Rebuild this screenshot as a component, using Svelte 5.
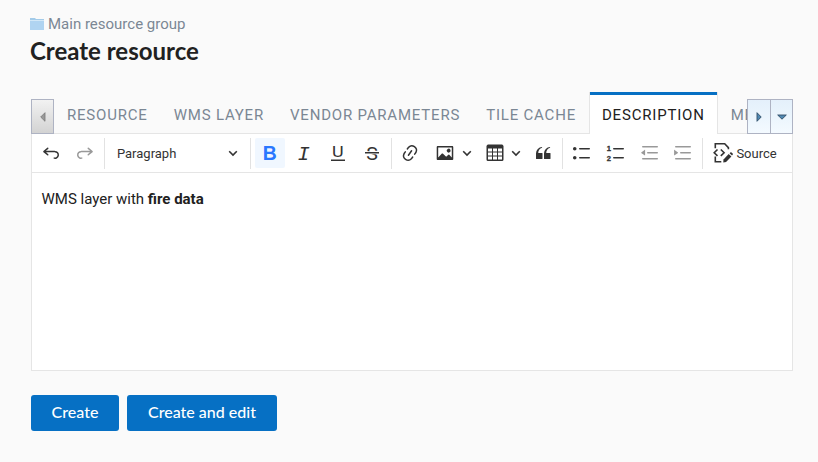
<script>
  const tabs = ['RESOURCE', 'WMS LAYER', 'VENDOR PARAMETERS', 'TILE CACHE', 'DESCRIPTION', 'METADATA'];
  let active = $state('DESCRIPTION');
</script>

{#snippet chevron()}
  <svg class="chev" width="10" height="10" viewBox="0 0 10 10"><path d="M1.2 3.2 5 7l3.8-3.8" /></svg>
{/snippet}

{#snippet undoArrow()}
  <path d="m5.042 9.367 2.189 1.837a.75.75 0 0 1-.965 1.149l-3.788-3.18a.747.747 0 0 1-.21-.284.75.75 0 0 1 .17-.945L6.23 4.762a.75.75 0 1 1 .964 1.15L4.863 7.866h8.917A.75.75 0 0 1 14 7.9a4 4 0 1 1-1.477 7.718l.344-1.489a2.5 2.5 0 1 0 1.094-4.73l.008-.032H5.042z" />
{/snippet}

<main>
  <div class="crumb">
    <svg width="14" height="12" viewBox="0 0 14 12"><path fill="#a3cbe9" d="M0 0h5l1 1h8v11H0z" /><path fill="#d3e8f7" d="M0 2h14v1H0z" /><path fill="#b0d4f1" d="M0 3h14v9H0z" /></svg>
    <span>Main resource group</span>
  </div>
  <h1>Create resource</h1>

  <section class="panel">
    <div class="tabbar">
      <button class="scroll prev" aria-label="Previous"><svg width="6" height="10" viewBox="0 0 6 10"><path d="M5 .7v8.6L.7 5z" fill="#999" stroke="#777" stroke-width=".8" /></svg></button>
      <div class="tabs">
        {#each tabs as tab}
          <button class="tab" class:active={tab === active} onclick={() => (active = tab)}>{tab}</button>
        {/each}
      </div>
      <button class="scroll next" aria-label="Next"><svg width="6" height="10" viewBox="0 0 6 10"><path d="M1 .7v8.6L5.2 5z" fill="#5089b3" stroke="#304d66" stroke-width=".9" /></svg></button>
      <button class="scroll more" aria-label="All tabs"><svg width="10" height="6" viewBox="0 0 10 6"><path d="M.7 1h8.6L5 5.2z" fill="#5089b3" stroke="#304d66" stroke-width=".9" /></svg></button>
    </div>

    <div class="toolbar">
      <button class="tool"><svg viewBox="0 0 20 20">{@render undoArrow()}</svg></button>
      <button class="tool dim"><svg viewBox="0 0 20 20"><g transform="matrix(-1 0 0 1 20 0)">{@render undoArrow()}</g></svg></button>
      <i class="sep"></i>
      <button class="heading"><span>Paragraph</span>{@render chevron()}</button>
      <i class="sep"></i>
      <button class="tool on"><svg viewBox="0 0 20 20"><text class="arial" x="2.7" y="17" font-size="19.5" font-weight="700" textLength="14" lengthAdjust="spacingAndGlyphs">B</text></svg></button>
      <button class="tool"><svg viewBox="0 0 20 20"><text class="mono" x="3.6" y="17" font-size="20.5">I</text></svg></button>
      <button class="tool"><svg viewBox="0 0 20 20"><text x="4.1" y="13.8" font-size="15.2" textLength="11.6" lengthAdjust="spacingAndGlyphs">U</text><path d="M3 18v-1.5h14V18z" /></svg></button>
      <button class="tool"><svg viewBox="0 0 20 20"><text x="4.3" y="16.8" font-size="19" textLength="11.6" lengthAdjust="spacingAndGlyphs">S</text><path fill="#fff" d="M3 8.2h14v3.1H3z" /><path d="M3 10.5V9h14v1.5z" /></svg></button>
      <i class="sep"></i>
      <button class="tool link"><svg viewBox="0 0 20 20"><path d="m11.077 15 .991-1.416a.75.75 0 1 1 1.229.86l-1.148 1.64a.748.748 0 0 1-.217.206 5.251 5.251 0 0 1-8.503-5.955.741.741 0 0 1 .12-.274l1.147-1.639a.75.75 0 1 1 1.228.86L4.933 10.7l.006.003a3.75 3.75 0 0 0 6.132 4.294l.006.004zm5.494-5.335a.748.748 0 0 1-.12.274l-1.147 1.639a.75.75 0 1 1-1.228-.86l.86-1.23a3.75 3.75 0 0 0-6.144-4.301l-.86 1.229a.75.75 0 0 1-1.229-.86l1.148-1.64a.748.748 0 0 1 .217-.206 5.251 5.251 0 0 1 8.503 5.955zm-4.563-2.532a.75.75 0 0 1 .184 1.045l-3.155 4.505a.75.75 0 1 1-1.229-.86l3.155-4.506a.75.75 0 0 1 1.045-.184z" /></svg></button>
      <button class="tool split"><svg viewBox="0 0 20 20"><path d="M6.91 10.54c.26-.23.64-.21.88.03l3.36 3.14 2.23-2.06a.64.64 0 0 1 .87 0l2.52 2.97V4.5H3.2v10.12l3.71-4.08zm10.27-7.51c.6 0 1.09.47 1.09 1.05v11.84c0 .59-.49 1.06-1.09 1.06H2.79c-.6 0-1.09-.47-1.09-1.06V4.08c0-.58.49-1.05 1.1-1.05h14.38zm-5.22 5.56a1.96 1.96 0 1 1 3.4-1.96 1.96 1.96 0 0 1-3.4 1.96z" /></svg>{@render chevron()}</button>
      <button class="tool split table"><svg viewBox="0 0 20 20"><path d="M3 5.5v3h4v-3H3zm0 4v3h4v-3H3zm0 4v3h4v-3H3zm5 3h4v-3H8v3zm5 0h4v-3h-4v3zm4-4v-3h-4v3h4zm0-4v-3h-4v3h4zm1.5 8A1.5 1.5 0 0 1 17 18H3a1.5 1.5 0 0 1-1.5-1.5V3c.222-.863 1.068-1.5 2-1.5h13c.932 0 1.778.637 2 1.5v13.5zM12 12.5v-3H8v3h4zm0-4v-3H8v3h4z" /></svg>{@render chevron()}</button>
      <button class="tool"><svg viewBox="0 0 20 20"><path d="M3 10.423a6.5 6.5 0 0 1 6.056-6.408l.038.67C6.448 5.423 5.354 7.663 5.22 10H9c.552 0 .5.432.5.986v4.511c0 .554-.448.503-1 .503h-5c-.552 0-.5-.449-.5-1.003v-4.574zm8 0a6.5 6.5 0 0 1 6.056-6.408l.038.67c-2.646.739-3.74 2.979-3.873 5.315H17c.552 0 .5.432.5.986v4.511c0 .554-.448.503-1 .503h-5c-.552 0-.5-.449-.5-1.003v-4.574z" /></svg></button>
      <i class="sep"></i>
      <button class="tool"><svg viewBox="0 0 20 20"><path d="M7 5.75c0 .414.336.75.75.75h9.5a.75.75 0 1 0 0-1.5h-9.5a.75.75 0 0 0-.75.75zm-6 0C1 4.784 1.777 4 2.75 4c.966 0 1.75.777 1.75 1.75 0 .966-.777 1.75-1.75 1.75C1.784 7.5 1 6.723 1 5.75zm6 9c0 .414.336.75.75.75h9.5a.75.75 0 1 0 0-1.5h-9.5a.75.75 0 0 0-.75.75zm-6 0c0-.966.777-1.75 1.75-1.75.966 0 1.75.777 1.75 1.75 0 .966-.777 1.75-1.75 1.75-.966 0-1.75-.777-1.75-1.75z" /></svg></button>
      <button class="tool"><svg viewBox="0 0 20 20"><path d="M7 5.75c0 .414.336.75.75.75h9.5a.75.75 0 1 0 0-1.5h-9.5a.75.75 0 0 0-.75.75zm0 9c0 .414.336.75.75.75h9.5a.75.75 0 1 0 0-1.5h-9.5a.75.75 0 0 0-.75.75z" /><text class="digit" x=".8" y="8">1</text><text class="digit" x=".8" y="17.8">2</text></svg></button>
      <button class="tool dim shift"><svg viewBox="0 0 20 20"><path d="M2 3.75c0 .414.336.75.75.75h14.5a.75.75 0 1 0 0-1.5H2.75a.75.75 0 0 0-.75.75zm5 6c0 .414.336.75.75.75h9.5a.75.75 0 1 0 0-1.5h-9.5a.75.75 0 0 0-.75.75zM2.75 16.5h14.5a.75.75 0 1 0 0-1.5H2.75a.75.75 0 1 0 0 1.5zM1.2 9.4 4.6 6.9c.3-.2.5-.1.5.2v5c0 .3-.2.4-.5.2L1.2 9.9z" /></svg></button>
      <button class="tool dim"><svg viewBox="0 0 20 20"><path d="M2 3.75c0 .414.336.75.75.75h14.5a.75.75 0 1 0 0-1.5H2.75a.75.75 0 0 0-.75.75zm5 6c0 .414.336.75.75.75h9.5a.75.75 0 1 0 0-1.5h-9.5a.75.75 0 0 0-.75.75zM2.75 16.5h14.5a.75.75 0 1 0 0-1.5H2.75a.75.75 0 1 0 0 1.5zM5 9.4 1.6 6.9c-.3-.2-.5-.1-.5.2v5c0 .3.2.4.5.2L5 9.9z" /></svg></button>
      <i class="sep"></i>
      <button class="tool source"><svg viewBox="0 0 20 20"><g fill="none" stroke="#333" stroke-width="1.6"><path d="M2.3 5.3V.8h9.4l3.7 3.8v1.7M2.3 13.5v5.2h6" /><path d="m4.5 6.5-3.3 3.2 3.3 3.2M7.8 6.5l3.3 3.2-3.3 3.2" /></g><path d="m15.7 11.1 2.7 2.5-5.3 5.4-2.8.5.2-2.9z" /><path d="m16.6 10.2.8-.8c.3-.3.8-.3 1.1 0l1.2 1.2c.3.3.3.8 0 1.1l-.7.8z" /></svg><span>Source</span></button>
    </div>

    <div class="content">WMS layer with <strong>fire data</strong></div>
  </section>

  <div class="actions">
    <button>Create</button>
    <button class="wide">Create and edit</button>
  </div>
</main>

<style>
  :global(body) { background: #fafafa; }
  main { box-sizing: border-box; width: 818px; height: 462px; padding: 15px 25px 0 31px; background: #fafafa; color: #212121; font-family: Roboto, sans-serif; overflow: hidden; }
  button { margin: 0; padding: 0; border: 0; background: none; font: inherit; color: inherit; box-sizing: border-box; }
  .crumb { display: flex; align-items: center; height: 18px; gap: 4px; margin-left: -1px; font-size: 15px; color: #7b8794; }
  h1 { margin: 1px 0 0 -1px; height: 34px; font: 700 24px/34px Lato, sans-serif; white-space: nowrap; }
  .panel { margin-top: 24px; width: 762px; }
  .tabbar { display: flex; align-items: flex-end; height: 42px; box-shadow: inset 0 -1px #e5e5e5; }
  .scroll { display: flex; flex: none; align-items: center; justify-content: center; width: 23px; height: 35px; border: 1px solid #aeb3c3; background: linear-gradient(#f2f2f2, #e2e2e2 50%, #d3d3d3); }
  .next, .more { background: linear-gradient(#e4f0fb, #ebf5fd 50%, #f4faff); }
  .next { width: 24px; }
  .more { margin-left: -1px; }
  .tabs { display: flex; flex: 1; min-width: 0; height: 42px; overflow: hidden; }
  .tab { flex: none; height: 42px; padding: 3px 12px 0; border: 1px solid transparent; border-width: 0 1px; font-size: 15px; letter-spacing: .8px; color: #7b8794; white-space: nowrap; }
  .tab.active { border-color: #e5e5e5; background: linear-gradient(#0670c4 3px, #fff 3px); color: #212121; }
  .toolbar { display: flex; align-items: center; box-sizing: border-box; height: 39px; padding: 0 4px; gap: 3.97px; border: 1px solid #e5e5e5; border-top: 0; background: #fff; }
  .tool { display: flex; flex: none; align-items: center; justify-content: center; width: 30px; height: 30px; border-radius: 2px; color: #333; }
  .tool svg:not(.chev) { flex: none; width: 20px; height: 20px; fill: currentColor; overflow: visible; }
  .tool.on { background: #f0f7ff; color: #2977ff; }
  .tool.dim { color: #999; }
  .tool.shift { padding-left: 1px; }
  .tool.link { padding-right: 1px; }
  .arial { font-family: "Liberation Sans", sans-serif; }
  .mono { font-family: "Liberation Mono", monospace; font-style: italic; }
  .digit { font: 700 7.6px "Liberation Sans", sans-serif; stroke: #333; stroke-width: .3px; }
  .sep { flex: none; width: 1px; height: 31px; background: #e2e2e2; }
  .chev { flex: none; fill: none; stroke: #333; stroke-width: 1.6; }
  .heading { display: flex; align-items: center; justify-content: space-between; flex: none; width: 137px; height: 30px; padding: 0 8px; font-size: 13px; color: #333; }
  .tool.split { width: 45px; padding: 0 3px 0 5px; justify-content: space-between; }
  .tool.table { padding-left: 6px; }
  .tool.source { width: 76px; gap: 3px; justify-content: flex-start; padding-left: 6px; font-size: 13px; }
  .content { box-sizing: border-box; height: 198px; padding: 16px 9.5px; border: 1px solid #e5e5e5; border-top: 0; background: #fff; font-size: 15px; line-height: 20px; }
  .actions { display: flex; gap: 8px; margin-top: 24px; }
  .actions button { display: flex; justify-content: center; width: 88px; height: 36px; border-radius: 3px; background: #0670c4; color: #fff; font: 500 16px/34px Lato, sans-serif; }
  .actions .wide { width: 150px; }
</style>
